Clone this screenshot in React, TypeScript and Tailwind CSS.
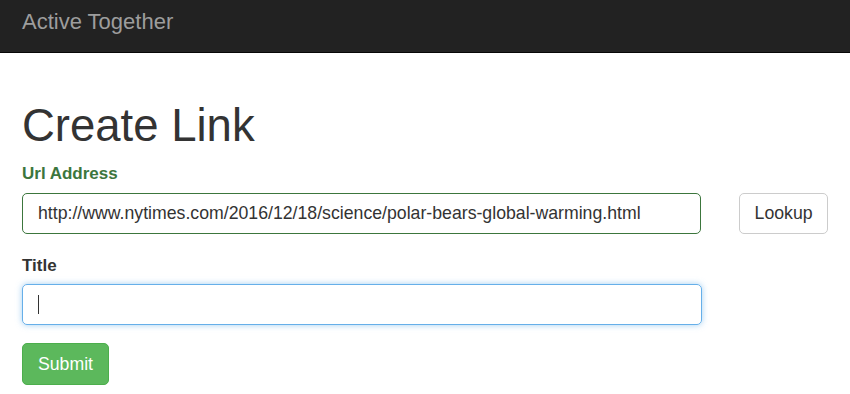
export default function App() {
  return (
    <div className="min-h-[394px] bg-white text-[#333] font-['Liberation_Sans',Arial,sans-serif]">
      {/* Navbar */}
      <nav className="h-[53px] bg-[#222] border-b border-[#080808] flex items-start pt-[9px] px-[22px]">
        <span className="text-[22px] leading-[26px] text-[#9d9d9d]">Active Together</span>
      </nav>

      <div className="px-[22px]">
        <h1 className="mt-[48px] text-[45.5px] leading-[1.1] font-normal text-[#333]">Create Link</h1>

        <form className="mt-[12px]" onSubmit={(e) => e.preventDefault()}>
          <label className="block text-[17px] font-bold text-[#3c763d] leading-[22px]">Url Address</label>
          <div className="flex items-center gap-[38px] mt-[8px]">
            <input
              type="text"
              defaultValue="http://www.nytimes.com/2016/12/18/science/polar-bears-global-warming.html"
              className="w-[680px] h-[41px] px-[15px] text-[17.7px] text-[#333] border border-[#3c763d] rounded-[5px] outline-none"
            />
            <button type="button" className="w-[89px] h-[41px] text-[17.7px] text-[#333] bg-white border border-[#ccc] rounded-[5px]">
              Lookup
            </button>
          </div>

          <label className="block mt-[21px] text-[17px] font-bold text-[#333] leading-[22px]">Title</label>
          <div className="mt-[7px] w-[680px] h-[41px] border border-[#66afe9] rounded-[5px] shadow-[0_0_6px_rgba(102,175,233,0.6)] flex items-center px-[15px]">
            <span className="w-px h-[19px] bg-[#333]" />
          </div>

          <button type="submit" className="mt-[18px] w-[87px] h-[42px] text-[17.7px] text-white bg-[#5cb85c] border border-[#4cae4c] rounded-[5px]">
            Submit
          </button>
        </form>
      </div>
    </div>
  )
}
